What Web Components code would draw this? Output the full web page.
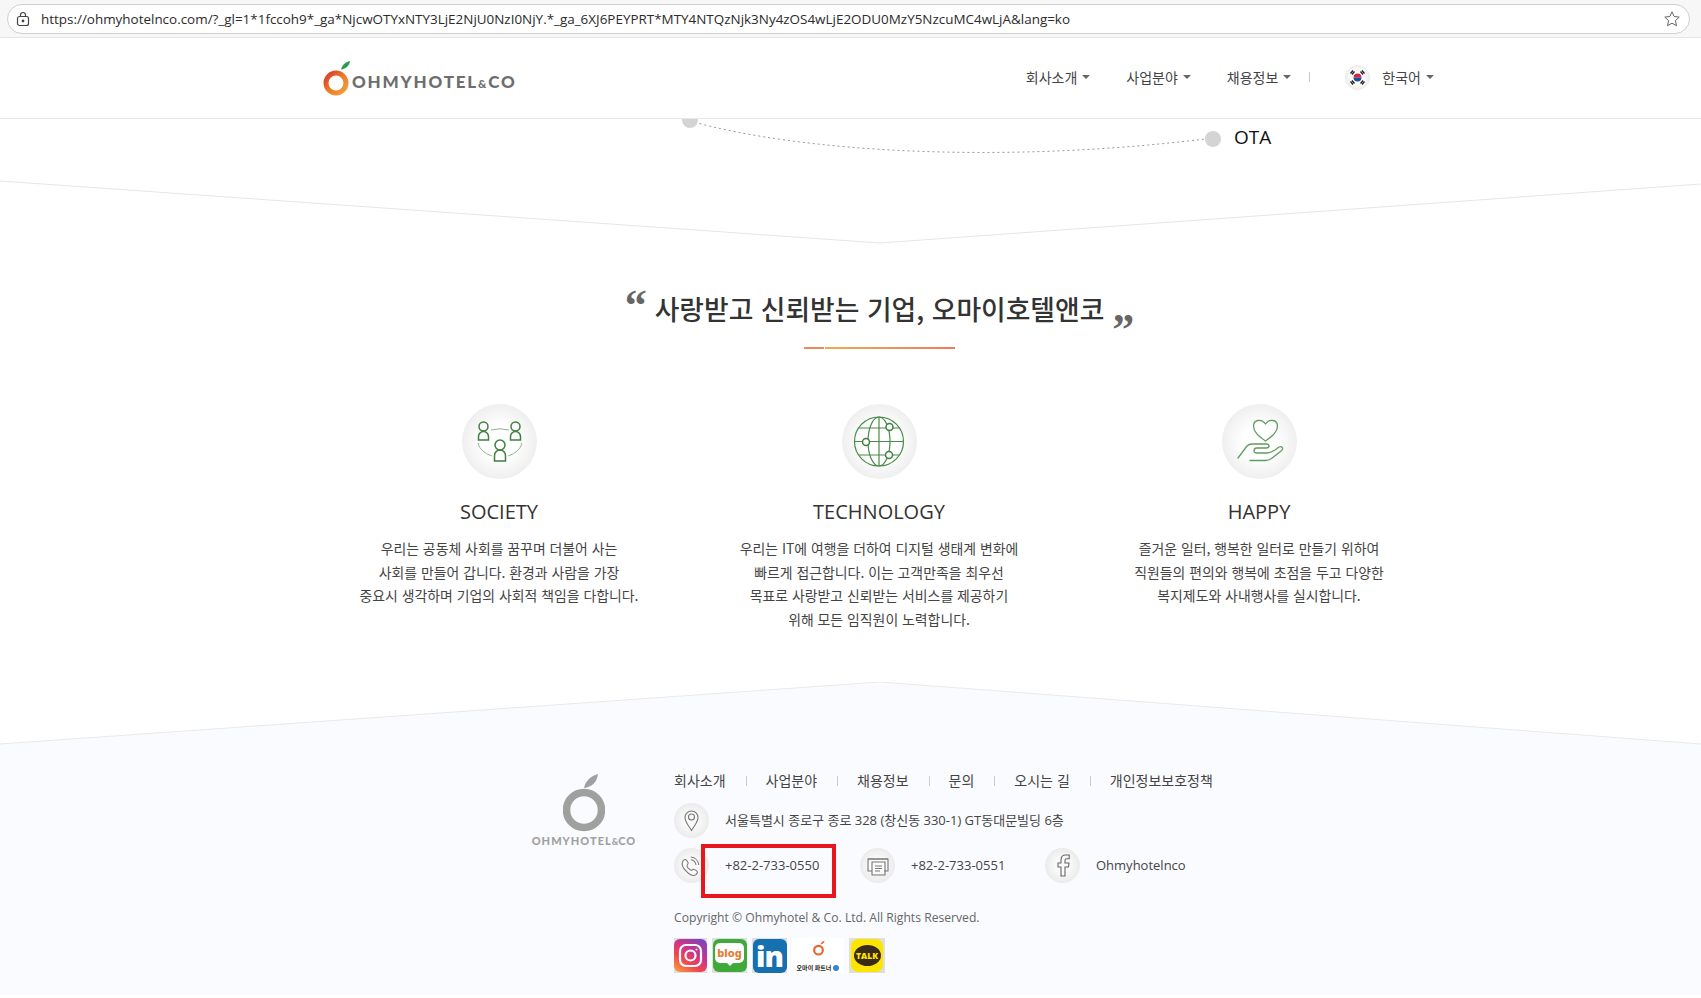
<!DOCTYPE html>
<html lang="ko">
<head>
<meta charset="utf-8">
<title>Ohmyhotel & Co</title>
<style>
    html, body {
        margin: 0;
        height: 998px;
        overflow: hidden;
        background: white;
        font-family: "Noto Sans CJK KR", "Noto Sans", sans-serif;
    }
</style>
</head>
<body>
<browser-bar url="https://ohmyhotelnco.com/?_gl=1*1fccoh9*_ga*NjcwOTYxNTY3LjE2NjU0NzI0NjY.*_ga_6XJ6PEYPRT*MTY4NTQzNjk3Ny4zOS4wLjE2ODU0MzY5NzcuMC4wLjA&amp;lang=ko"></browser-bar>
<site-header></site-header>
<flow-strip></flow-strip>
<quote-heading>사랑받고 신뢰받는 기업, 오마이호텔앤코</quote-heading>
<value-row>
    <value-card title="SOCIETY" icon="society">우리는 공동체 사회를 꿈꾸며 더불어 사는<br>사회를 만들어 갑니다. 환경과 사람을 가장<br>중요시 생각하며 기업의 사회적 책임을 다합니다.</value-card>
    <value-card title="TECHNOLOGY" icon="globe">우리는 IT에 여행을 더하여 디지털 생태계 변화에<br>빠르게 접근합니다. 이는 고객만족을 최우선<br>목표로 사랑받고 신뢰받는 서비스를 제공하기<br>위해 모든 임직원이 노력합니다.</value-card>
    <value-card title="HAPPY" icon="hand">즐거운 일터, 행복한 일터로 만들기 위하여<br>직원들의 편의와 행복에 초점을 두고 다양한<br>복지제도와 사내행사를 실시합니다.</value-card>
</value-row>
<site-footer></site-footer>

<script>
// browser chrome on top of the screenshot
class BrowserBar extends HTMLElement {
    constructor() {
        super();
        const shadow = this.attachShadow({ mode: 'open' });
        shadow.innerHTML = `
            <style>
                :host {
                    display: block;
                    height: 38px;
                    box-sizing: border-box;
                    padding: 4px 11px 3px 7px;
                    background: #f7f7f7;
                    border-bottom: 1px solid #e6e6e6;
                }
                .pill {
                    height: 100%;
                    box-sizing: border-box;
                    display: flex;
                    align-items: center;
                    gap: 11px;
                    padding: 0 8px 0 8px;
                    background: #fff;
                    border: 1px solid #cfcfcf;
                    border-radius: 16px;
                }
                .url {
                    flex: 1;
                    padding-top: 1px;
                    font: 13.45px/1 "Open Sans", sans-serif;
                    color: #2b2b2b;
                    white-space: nowrap;
                }
                svg { display: block; flex: none; }
            </style>
            <div class="pill">
                <svg width="14" height="16" viewBox="0 0 14 16" fill="none" stroke="#444" stroke-width="1.2">
                    <rect x="1.5" y="5.5" width="11" height="9" rx="2"/>
                    <path d="M4.5 5.5V4a2.5 2.5 0 0 1 5 0v1.5"/>
                    <circle cx="7" cy="10" r="0.8" fill="#444"/>
                </svg>
                <span class="url">${this.getAttribute('url')}</span>
                <svg width="18" height="18" viewBox="0 0 18 18" fill="none" stroke="#666" stroke-width="1">
                    <path d="M9 1.8l2.2 4.7 5 .6-3.7 3.5 1 5.1L9 13.2l-4.500 2.500 1-5.100L1.800 7.100l5-.6z"/>
                </svg>
            </div>`;
    }
}

const logoMark = `
    <path d="M20 9.500c1-4 4-7.500 9-8.500-.5 4.500-4 8-9 8.500z" fill="LEAF"/>
    <circle cx="15" cy="23" r="10" fill="none" stroke="url(#ring)" stroke-width="5"/>`;

class SiteHeader extends HTMLElement {
    constructor() {
        super();
        const shadow = this.attachShadow({ mode: 'open' });
        shadow.innerHTML = `
            <style>
                :host {
                    display: flex;
                    align-items: center;
                    justify-content: space-between;
                    height: 81px;
                    box-sizing: border-box;
                    padding: 0 267px 2px 321px;
                    background: #fff;
                    border-bottom: 1px solid #e8e8e8;
                    position: relative;
                    z-index: 2;
                }
                .logo { display: flex; align-items: flex-end; gap: 1px; padding-top: 2px; }
                .logo svg { display: block; }
                .logo b {
                    font: 900 17px/1 Lato, sans-serif;
                    letter-spacing: 1.8px;
                    color: #6d6d6d;
                    margin-bottom: 7px;
                    white-space: nowrap;
                }
                .logo b small { font-size: 11.500px; letter-spacing: 0; margin: 0 2px 0 0; }
                nav { display: flex; align-items: center; }
                .item {
                    display: flex;
                    align-items: center;
                    gap: 5px;
                    font-size: 14px;
                    color: #444;
                    margin-right: 36px;
                }
                .item::after {
                    content: "";
                    border: 4px solid transparent;
                    border-top-color: #666;
                    border-bottom: 0;
                }
                .item.last { margin-right: 0; }
                .sep { width: 1px; height: 10px; background: #ccc; margin: 0 35px 0 -18px; }
                .flag {
                    width: 25px;
                    height: 25px;
                    margin-right: 12px;
                    border-radius: 50%;
                    background: radial-gradient(closest-side, #fff 45%, #ececec);
                    display: flex;
                    align-items: center;
                    justify-content: center;
                }
            </style>
            <div class="logo">
                <svg width="30" height="38" viewBox="0 0 30 36">
                    <defs>
                        <linearGradient id="ring" x1="0" y1="0" x2="1" y2="1">
                            <stop offset="0" stop-color="#d63a2c"/>
                            <stop offset="0.5" stop-color="#ee7a2b"/>
                            <stop offset="1" stop-color="#f0a13a"/>
                        </linearGradient>
                    </defs>
                    ${logoMark.replace('LEAF', '#2f9a4a')}
                </svg>
                <b>OHMYHOTEL<small>&amp;</small>CO</b>
            </div>
            <nav>
                <span class="item">회사소개</span>
                <span class="item">사업분야</span>
                <span class="item">채용정보</span>
                <span class="sep"></span>
                <span class="flag">
                    <svg width="17" height="17" viewBox="0 0 17 17">
                        <path d="M4.500 8.500a4 4 0 0 1 8 0z" fill="#d8263c"/>
                        <path d="M4.500 8.500a4 4 0 0 0 8 0z" fill="#1c4fa0"/>
                        <g stroke="#222" stroke-width="1.300">
                            <path d="M1.500 4.500l2.500-3M3 5.500l2.500-3M11.500 2.500l2.500 3M13 1.500l2.500 3M1.500 12.500l2.500 3M3 11.500l2.500 3M11.500 14.500l2.500-3M13 15.500l2.500-3"/>
                        </g>
                    </svg>
                </span>
                <span class="item last">한국어</span>
            </nav>`;
    }
}

// the piece of the timeline diagram left on screen, plus the wedge line under it
class FlowStrip extends HTMLElement {
    constructor() {
        super();
        const shadow = this.attachShadow({ mode: 'open' });
        shadow.innerHTML = `
            <style>
                :host { display: block; height: 125px; position: relative; }
                svg { position: absolute; left: 0; top: 0; }
                .ota {
                    position: absolute;
                    left: 1234px;
                    top: 4px;
                    font: 19px/28px "Open Sans", sans-serif;
                    color: #111;
                }
            </style>
            <svg width="1701" height="125" viewBox="0 119 1701 125" fill="none">
                <path d="M690 121C800 152 1000 164 1205 139" stroke="#999" stroke-width="1" stroke-dasharray="2 3"/>
                <circle cx="690" cy="120" r="8" fill="#d4d4d4"/>
                <circle cx="1213" cy="139" r="8" fill="#d4d4d4"/>
                <path d="M0 181L880 243L1701 184" stroke="#e6e6e6" stroke-width="1"/>
            </svg>
            <span class="ota">OTA</span>`;
    }
}

class QuoteHeading extends HTMLElement {
    constructor() {
        super();
        const shadow = this.attachShadow({ mode: 'open' });
        shadow.innerHTML = `
            <style>
                :host {
                    display: flex;
                    flex-direction: column;
                    align-items: center;
                    padding: 45px 0 0 58px;
                }
                .line { display: flex; align-items: flex-start; height: 60px; }
                h2 {
                    margin: 0 10px;
                    font: 500 26.800px/40px "Noto Sans CJK KR", sans-serif;
                    color: #333;
                    white-space: nowrap;
                }
                .q {
                    font: bold 44px/44px "Liberation Serif", serif;
                    color: #666;
                    height: 40px;
                    width: 18px;
                    margin-top: -5px;
                    display: flex;
                    justify-content: center;
                }
                .q.close { margin-top: 19px; }
                .rule { display: flex; gap: 1px; height: 2px; margin-top: -2px; }
                .rule i:first-child { width: 20px; background: #ec8a5a; }
                .rule i:last-child { width: 130px; background: linear-gradient(90deg, #eeab4f, #f07a62); }
            </style>
            <div class="line">
                <span class="q">“</span>
                <h2><slot></slot></h2>
                <span class="q close">”</span>
            </div>
            <div class="rule"><i></i><i></i></div>`;
    }
}

class ValueRow extends HTMLElement {
    constructor() {
        super();
        const shadow = this.attachShadow({ mode: 'open' });
        shadow.innerHTML = `
            <style>
                :host {
                    display: grid;
                    grid-template-columns: repeat(3, 380px);
                    padding: 56px 0 0 309px;
                    height: 333px;
                    box-sizing: border-box;
                }
            </style>
            <slot></slot>`;
    }
}

const valueIcons = {
    society: `
        <g fill="none" stroke="#3f7f3f" stroke-width="1.500">
            <circle cx="21.500" cy="22.500" r="4.500"/><path d="M16.500 36v-3.500a5 5 0 0 1 10 0V36z"/>
            <circle cx="53.500" cy="22.500" r="4.500"/><path d="M48.500 36v-3.500a5 5 0 0 1 10 0V36z"/>
            <circle cx="38" cy="41" r="5"/><path d="M32.500 57v-5.500a5.500 5.500 0 0 1 11 0V57z"/>
            <g stroke="#8fb58f" stroke-width="1"><path d="M29 26q9-2.500 18 0M16 39q2 9 14 13M60 39q-2 9-14 13"/></g>
        </g>`,
    globe: `
        <g fill="none" stroke="#4b8a4b" stroke-width="1.200">
            <circle cx="37" cy="37.500" r="24.500"/>
            <ellipse cx="37" cy="37.500" rx="11" ry="24.500"/>
            <path d="M37 13v49M12.500 37.500h49M17 24h40M17 51h40"/>
            <g fill="#fff" stroke="#3f7f3f" stroke-width="1.500">
                <circle cx="24" cy="38" r="3.500"/><circle cx="47.500" cy="23" r="3.500"/><circle cx="47" cy="51" r="3.500"/>
            </g>
        </g>`,
    hand: `
        <g fill="none" stroke="#5f9c5f" stroke-width="1.300" stroke-linecap="round" stroke-linejoin="round">
            <path d="M43.500 37c-7-5-12-9-12-15 0-6 8-8 12-2 4-6 12-4 12 2 0 6-5 10-12 15z"/>
            <path d="M16 54l9-12q2-2 5-2h14q3 0 3 2t-3 2H35q-3 0-3 2.500t3 2.500h10q3 0 8-3l4-3q3-1 3.500 1t-2 3.500l-9 7q-3 2-6 2H28"/>
        </g>`
};

class ValueCard extends HTMLElement {
    constructor() {
        super();
        const shadow = this.attachShadow({ mode: 'open' });
        shadow.innerHTML = `
            <style>
                :host {
                    display: flex;
                    flex-direction: column;
                    align-items: center;
                    text-align: center;
                }
                .icon {
                    width: 75px;
                    height: 75px;
                    margin-top: -1px;
                    border-radius: 50%;
                    background: radial-gradient(closest-side, #fff 45%, #efefef);
                }
                svg { display: block; }
                h3 {
                    margin: 17px 0 0;
                    font: 400 20px/32px "Open Sans", sans-serif;
                    color: #333;
                }
                p {
                    margin: 9px 0 0;
                    font-size: 13.900px;
                    line-height: 23.500px;
                    color: #444;
                    white-space: nowrap;
                }
            </style>
            <div class="icon">
                <svg width="75" height="75" viewBox="0 0 75 75">${valueIcons[this.getAttribute('icon')]}</svg>
            </div>
            <h3>${this.getAttribute('title')}</h3>
            <p><slot></slot></p>`;
    }
}

class ContactItem extends HTMLElement {
    constructor() {
        super();
        const shadow = this.attachShadow({ mode: 'open' });
        shadow.innerHTML = `
            <style>
                :host {
                    display: flex;
                    align-items: center;
                    gap: 16px;
                    font: 13px/35px "Open Sans", "Noto Sans CJK KR", sans-serif;
                    color: #444;
                    white-space: nowrap;
                }
                .round {
                    width: 35px;
                    height: 35px;
                    flex: none;
                    border-radius: 50%;
                    background: radial-gradient(closest-side, #fafafa 40%, #ebebeb);
                }
            </style>
            <span class="round"><slot name="icon"></slot></span>
            <span><slot></slot></span>`;
    }
}

class SocialRow extends HTMLElement {
    constructor() {
        super();
        const shadow = this.attachShadow({ mode: 'open' });
        shadow.innerHTML = `
            <style>
                :host { display: flex; gap: 5px; height: 35px; }
                .tile {
                    width: 35px;
                    height: 35px;
                    flex: none;
                    background: #dfdfdf;
                    display: flex;
                    align-items: center;
                    justify-content: center;
                }
                .insta { width: 33px; }
                .insta div {
                    width: 33px;
                    height: 33px;
                    border-radius: 6px;
                    background: linear-gradient(215deg, #6a4bc4 0%, #c9348e 40%, #f0444f 65%, #f9a53c 100%);
                    display: flex;
                    align-items: center;
                    justify-content: center;
                }
                .blog div {
                    width: 34px;
                    height: 33px;
                    border-radius: 6px;
                    background: #3faa3a;
                    display: flex;
                    align-items: center;
                    justify-content: center;
                }
                .blog span {
                    background: #fff;
                    border-radius: 5px;
                    width: 29px;
                    height: 20px;
                    margin-bottom: 5px;
                    font: 800 11px/19px "Noto Sans", sans-serif;
                    color: #e8792f;
                    text-align: center;
                    position: relative;
                }
                .blog span::after {
                    content: "";
                    position: absolute;
                    left: 11px;
                    top: 19px;
                    border: 4px solid transparent;
                    border-top-color: #fff;
                    border-bottom: 0;
                }
                .in div {
                    width: 34px;
                    height: 34px;
                    border-radius: 6px;
                    background: #1470ae;
                    color: #fff;
                    font: 800 29px/33px "Open Sans", sans-serif;
                    text-align: center;
                    letter-spacing: -1px;
                }
                .partner {
                    width: 52px;
                    background: #fff;
                    flex-direction: column;
                    justify-content: space-between;
                    padding: 2px 0 1px;
                    box-sizing: border-box;
                    font-weight: 700;
                    font-size: 6px;
                    line-height: 8px;
                    color: #222;
                    white-space: nowrap;
                }
                .partner em { font-style: normal; display: flex; align-items: center; gap: 2px; }
                .partner i { width: 6px; height: 6px; border-radius: 50%; background: #3b82d6; }
                .talk { width: 36px; }
                .talk div {
                    width: 32px;
                    height: 33px;
                    border-radius: 7px;
                    background: #fee500;
                    display: flex;
                    align-items: center;
                    justify-content: center;
                }
                .talk span {
                    width: 27px;
                    height: 21px;
                    border-radius: 50%;
                    background: #3a2a1a;
                    color: #fee500;
                    font: 800 8.500px/21px "Open Sans", sans-serif;
                    text-align: center;
                }
                svg { display: block; }
            </style>
            <a class="tile insta"><div>
                <svg width="25" height="25" viewBox="0 0 25 25" fill="none" stroke="#fff" stroke-width="2.200">
                    <rect x="2" y="2" width="21" height="21" rx="6"/>
                    <circle cx="12.500" cy="12.500" r="5"/>
                    <circle cx="18.500" cy="6.500" r="1" fill="#fff" stroke="none"/>
                </svg>
            </div></a>
            <a class="tile blog"><div><span>blog</span></div></a>
            <a class="tile in"><div>in</div></a>
            <a class="tile partner">
                <svg width="13" height="16" viewBox="0 0 30 36">${logoMark.replace('LEAF', '#e8642c').replace('url(#ring)', '#e8642c')}</svg>
                <em>오마이 파트너<i></i></em>
            </a>
            <a class="tile talk"><div><span>TALK</span></div></a>`;
    }
}

class SiteFooter extends HTMLElement {
    constructor() {
        super();
        const shadow = this.attachShadow({ mode: 'open' });
        shadow.innerHTML = `
            <style>
                :host {
                    display: block;
                    position: relative;
                    isolation: isolate;
                    height: 313px;
                    box-sizing: border-box;
                    padding: 85px 0 0 532px;
                    border-bottom: 2px solid #cfcfcf;
                }
                .wedge { position: absolute; left: 0; top: 0; z-index: -1; }
                .wrap { display: flex; gap: 38px; }
                .logo {
                    width: 104px;
                    display: flex;
                    flex-direction: column;
                    align-items: center;
                    padding-top: 7px;
                }
                .logo svg { display: block; }
                .logo b {
                    font: 900 11px/12px Lato, sans-serif;
                    letter-spacing: 1px;
                    color: #a0a0a0;
                    white-space: nowrap;
                    margin-top: 3px;
                }
                .logo b small { font-size: 9px; letter-spacing: 0; }
                .links { display: flex; height: 26px; align-items: center; font-size: 14px; color: #444; white-space: nowrap; }
                .links a + a { margin-left: 20px; padding-left: 20px; position: relative; }
                .links a + a::before {
                    content: "";
                    position: absolute;
                    left: 0;
                    top: 6px;
                    width: 1px;
                    height: 10px;
                    background: #ccc;
                }
                .row { display: flex; margin-top: 10px; }
                contact-item svg { display: block; }
                .phone { width: 186px; }
                .fax { width: 185px; }
                .mark {
                    position: absolute;
                    left: 701px;
                    top: 162px;
                    width: 135px;
                    height: 54px;
                    box-sizing: border-box;
                    border: 4px solid #e8171f;
                }
                .copy {
                    margin: 26px 0 11px;
                    font: 12.150px/18px "Open Sans", sans-serif;
                    color: #666;
                }
            </style>
            <svg class="wedge" width="1701" height="313" viewBox="0 0 1701 313">
                <path d="M0 62L880 0L1701 62V313H0z" fill="#fafbff"/>
                <path d="M0 62L880 0L1701 62" fill="none" stroke="#e9e9e9"/>
            </svg>
            <div class="wrap">
                <div class="logo">
                    <svg width="42" height="58" viewBox="0 0 42 58">
                        <path d="M21 14c1-6 6-12 14-14-1 8-6 13-14 14z" fill="#a0a0a0"/>
                        <circle cx="21" cy="36" r="17.500" fill="none" stroke="#a0a0a0" stroke-width="7.500"/>
                    </svg>
                    <b>OHMYHOTEL<small>&amp;</small>CO</b>
                </div>
                <div class="info">
                    <div class="links">
                        <a>회사소개</a><a>사업분야</a><a>채용정보</a><a>문의</a><a>오시는 길</a><a>개인정보보호정책</a>
                    </div>
                    <div class="row" style="margin-top:10px">
                        <contact-item>
                            <svg slot="icon" width="35" height="35" viewBox="0 0 35 35" fill="none" stroke="#777" stroke-width="1.100">
                                <path d="M17.500 27.500c-3-5-6.500-8.500-6.500-13a6.500 6.500 0 0 1 13 0c0 4.500-3.500 8-6.500 13z"/>
                                <circle cx="17.500" cy="14" r="3"/>
                            </svg>
                            서울특별시 종로구 종로 328 (창신동 330-1) GT동대문빌딩 6층
                        </contact-item>
                    </div>
                    <div class="row">
                        <contact-item class="phone">
                            <svg slot="icon" width="35" height="35" viewBox="-2 -5.750 43.750 43.750" fill="none" stroke="#777" stroke-width="1.300">
                                <path d="M9 10.500c2-2.500 3.500-2.500 5-.5l1.500 2.500c.5 1 0 2-1 3-.8.800-.5 1.500.5 3l2.500 2.500c1.500 1.300 2.300 1.500 3 .8 1-1 2-1.300 3-.8l2.500 1.500c2 1.500 1.500 3-.5 5-3 2.500-8 0-12-4s-6.500-9-4.500-12.500z"/>
                                <path d="M19 9c3.500.5 6 3 6.500 6.500M19 5.500c5.500.5 9.500 4.500 10 10"/>
                            </svg>
                            +82-2-733-0550
                        </contact-item>
                        <contact-item class="fax">
                            <svg slot="icon" width="35" height="35" viewBox="0 0 35 35" fill="none" stroke="#777" stroke-width="1.100">
                                <path d="M12 23H8v-12h20v12h-4"/>
                                <path d="M8 11h20M12 14h13v13H12zM15 18h7M15 20.500h7M15 23h5"/>
                            </svg>
                            +82-2-733-0551
                        </contact-item>
                        <contact-item>
                            <svg slot="icon" width="35" height="35" viewBox="0 0 35 35" fill="none" stroke="#666" stroke-width="1.100">
                                <path d="M20 28v-9h3.500l.5-4h-4v-2.500c0-1.200.5-1.800 2-1.800h2.200V7h-3.500c-3 0-4.700 2-4.700 5v3h-3v4h3v9z"/>
                            </svg>
                            Ohmyhotelnco
                        </contact-item>
                    </div>
                    <div class="copy">Copyright © Ohmyhotel &amp; Co. Ltd. All Rights Reserved.</div>
                    <social-row></social-row>
                </div>
            </div>
            <div class="mark"></div>`;
    }
}

customElements.define('browser-bar', BrowserBar);
customElements.define('site-header', SiteHeader);
customElements.define('flow-strip', FlowStrip);
customElements.define('quote-heading', QuoteHeading);
customElements.define('value-row', ValueRow);
customElements.define('value-card', ValueCard);
customElements.define('contact-item', ContactItem);
customElements.define('social-row', SocialRow);
customElements.define('site-footer', SiteFooter);
</script>
</body>
</html>
